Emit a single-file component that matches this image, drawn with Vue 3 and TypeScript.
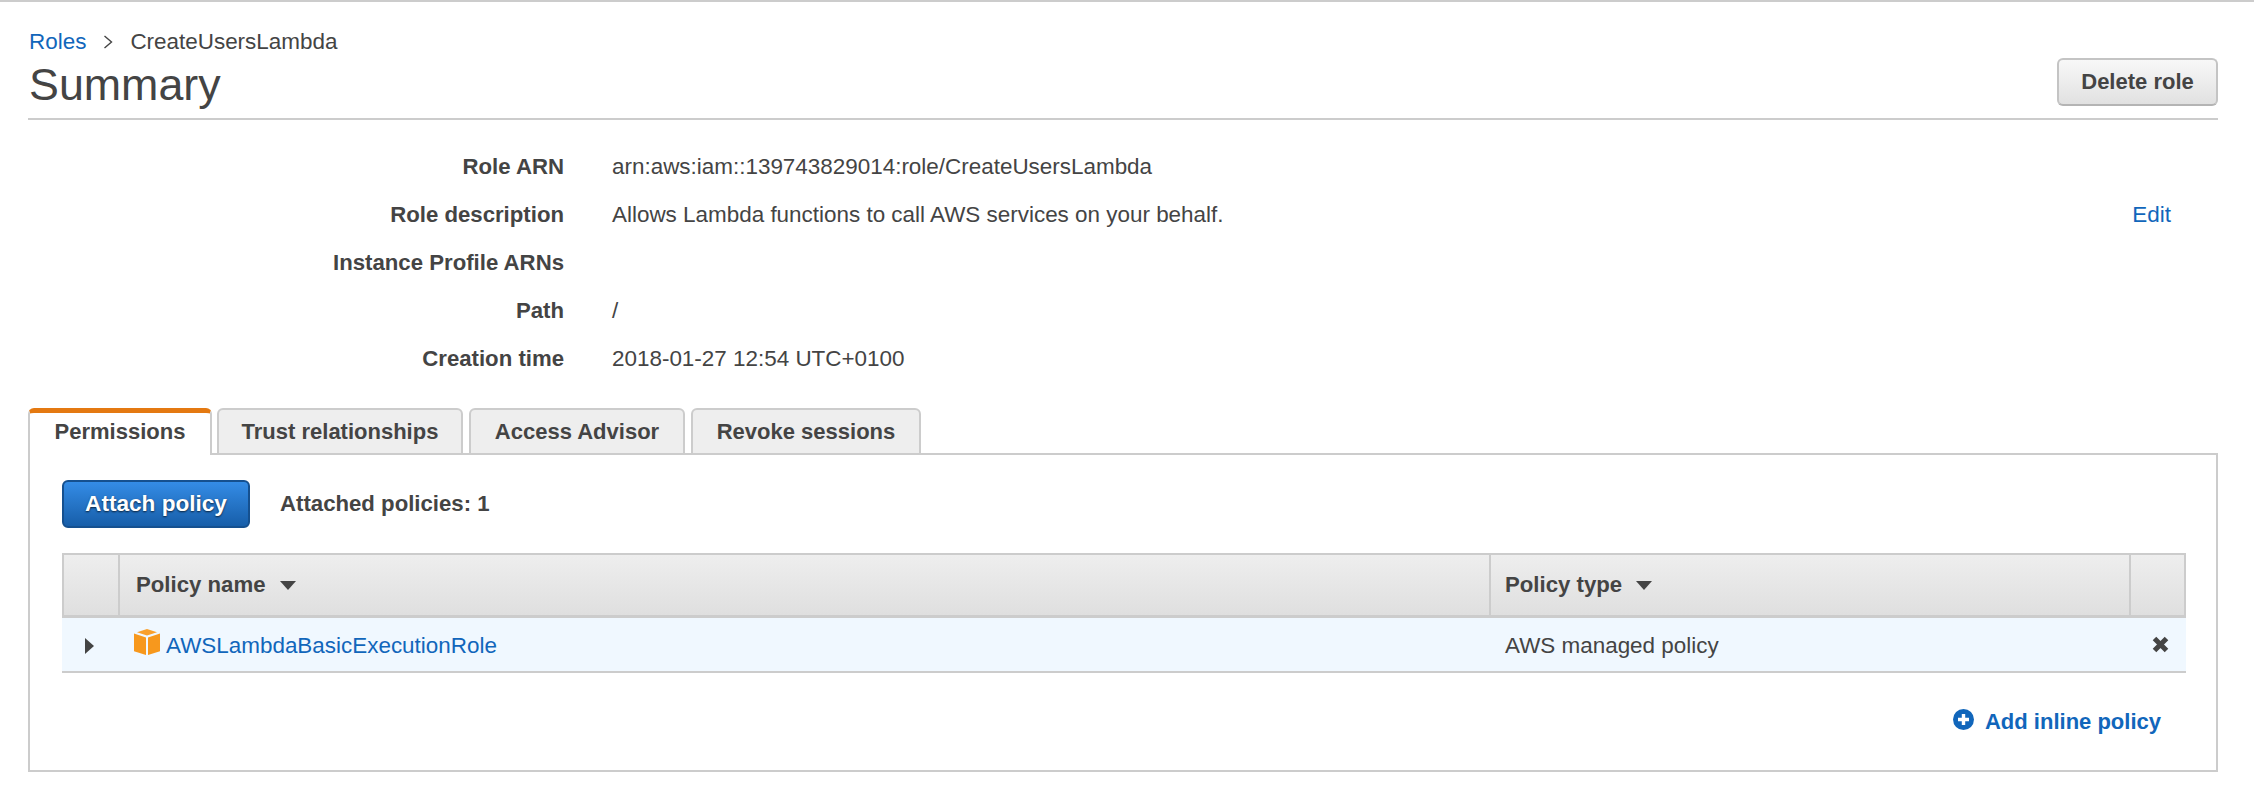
<template>
  <div class="pagina">
    <header class="cabecera">
      <div>
        <nav class="migas">
          <a class="enlace">Roles</a>
          <svg class="sep" width="10" height="14" viewBox="0 0 10 14"><path d="M1.5 1 L8.5 7 L1.5 13" fill="none" stroke="#444" stroke-width="1.4" /></svg>
          <span>CreateUsersLambda</span>
        </nav>
        <h1 class="titulo">Summary</h1>
      </div>
      <button class="btn borrar">Delete role</button>
    </header>

    <section class="detalles">
      <div class="fila" v-for="fila in filas" :key="fila.etiqueta">
        <span class="etiqueta">{{ fila.etiqueta }}</span>
        <span class="valor">{{ fila.valor }}</span>
        <a v-if="fila.editable" class="enlace editar">Edit</a>
      </div>
    </section>

    <div class="pestanas">
      <div
        v-for="p in pestanas"
        :key="p.nombre"
        :class="['pestana', { activa: p.nombre === activa }]"
        :style="{ width: p.ancho + 'px' }"
      >
        {{ p.nombre }}
      </div>
    </div>

    <section class="panel">
      <div class="acciones">
        <button class="btn btn-azul">Attach policy</button>
        <span class="adjuntas">Attached policies: 1</span>
      </div>

      <div class="tabla">
        <div class="celda cab"></div>
        <div class="celda cab texto">Policy name <span class="caret"></span></div>
        <div class="celda cab texto tipo-cab">Policy type <span class="caret"></span></div>
        <div class="celda cab ultima"></div>

        <div class="celda dato flecha-celda"><span class="flecha"></span></div>
        <div class="celda dato nombre">
          <svg class="cubo" width="26" height="26" viewBox="0 0 26 26">
            <path d="M13 0 L23 3.2 L13 6.6 L3 3.2 Z" fill="#f9a02c" />
            <path d="M0 4.6 L12 8.6 V26 L0 22.2 Z" fill="#f7981d" />
            <path d="M26 4.6 L14 8.6 V26 L26 22.2 Z" fill="#f7981d" />
          </svg>
          <a class="enlace">AWSLambdaBasicExecutionRole</a>
        </div>
        <div class="celda dato tipo">AWS managed policy</div>
        <div class="celda dato cerrar">
          <svg width="17" height="17" viewBox="0 0 17 17"><path d="M2.5 2.5 L14.5 14.5 M14.5 2.5 L2.5 14.5" stroke="#444" stroke-width="5" fill="none" /></svg>
        </div>
      </div>

      <div class="pie">
        <a class="enlace agregar">
          <svg class="mas" width="21" height="21" viewBox="0 0 21 21">
            <circle cx="10.5" cy="10.5" r="10.5" fill="#1166bb" />
            <path d="M10.5 5 V16 M5 10.5 H16" stroke="#fff" stroke-width="3.4" />
          </svg>
          Add inline policy
        </a>
      </div>
    </section>
  </div>
</template>

<script setup lang="ts">
interface Fila {
  etiqueta: string;
  valor: string;
  editable?: boolean;
}

const filas: Fila[] = [
  { etiqueta: 'Role ARN', valor: 'arn:aws:iam::139743829014:role/CreateUsersLambda' },
  { etiqueta: 'Role description', valor: 'Allows Lambda functions to call AWS services on your behalf.', editable: true },
  { etiqueta: 'Instance Profile ARNs', valor: '' },
  { etiqueta: 'Path', valor: '/' },
  { etiqueta: 'Creation time', valor: '2018-01-27 12:54 UTC+0100' },
];

const activa = 'Permissions';

const pestanas = [
  { nombre: 'Permissions', ancho: 184 },
  { nombre: 'Trust relationships', ancho: 246 },
  { nombre: 'Access Advisor', ancho: 216 },
  { nombre: 'Revoke sessions', ancho: 230 },
];
</script>

<style>
html,
body {
  background: #fff;
}
</style>

<style scoped>
.pagina {
  box-sizing: border-box;
  height: 804px;
  padding: 0 36px 0 28px;
  border-top: 2px solid #ccc;
  font-family: 'Liberation Sans', Arial, sans-serif;
  font-size: 22.45px;
  color: #444;
  overflow: hidden;
}

.enlace {
  color: #1166bb;
}

.cabecera {
  display: flex;
  justify-content: space-between;
  align-items: flex-end;
  padding: 28px 0 9px;
  border-bottom: 2px solid #ccc;
}

.migas {
  display: flex;
  align-items: center;
  gap: 17px;
  height: 24px;
  margin-left: 1px;
}

.titulo {
  margin: 5px 0 0 1px;
  font-size: 44.8px;
  font-weight: 400;
  line-height: 50px;
}

.btn {
  box-sizing: border-box;
  width: 161px;
  height: 48px;
  border: 2px solid #c4c4c4;
  border-bottom-color: #b4b4b4;
  border-radius: 6px;
  background: linear-gradient(#f8f8f8, #e1e1e1);
  color: #444;
  font-family: inherit;
  font-size: 22px;
  font-weight: 700;
}

.borrar {
  margin-bottom: 3px;
}

.detalles {
  margin-top: 23px;
}

.fila {
  display: flex;
  align-items: center;
  height: 48px;
}

.etiqueta {
  width: 536px;
  font-size: 22.2px;
  font-weight: 700;
  text-align: right;
}

.valor {
  margin-left: 48px;
  flex: 1;
}

.editar {
  margin-right: 47px;
}

.pestanas {
  display: flex;
  margin: 25px 0 -2px;
  gap: 6px;
  position: relative;
}

.pestana {
  box-sizing: border-box;
  height: 47px;
  border: 2px solid #ccc;
  border-radius: 6px 6px 0 0;
  background: #eee;
  font-size: 22px;
  font-weight: 700;
  line-height: 44px;
  text-align: center;
}

.pestana.activa {
  margin-right: -1px;
  border-top: 5px solid #e47911;
  border-bottom: none;
  background: #fff;
  line-height: 38px;
  position: relative;
  z-index: 1;
}

.panel {
  box-sizing: border-box;
  height: 319px;
  padding: 25px 30px 0 32px;
  border: 2px solid #ccc;
}

.acciones {
  display: flex;
  align-items: center;
  gap: 30px;
}

.btn-azul {
  width: 188px;
  border: 2px solid #15508f;
  border-radius: 6px;
  background: linear-gradient(#348ce6, #175ea9);
  color: #fff;
  font-size: 22.6px;
  text-shadow: 0 1px 2px rgba(0, 0, 0, 0.7);
}

.adjuntas {
  font-size: 22.2px;
  font-weight: 700;
}

.tabla {
  display: grid;
  grid-template-columns: 56px 1371px 640px 57px;
  grid-template-rows: 65px 55px;
  margin-top: 25px;
}

.celda {
  box-sizing: border-box;
  display: flex;
  align-items: center;
}

.cab {
  border-top: 2px solid #ccc;
  border-bottom: 3px solid #ccc;
  border-left: 2px solid #ccc;
  background: linear-gradient(#eee, #dfdfdf);
}

.cab.ultima {
  border-right: 2px solid #ccc;
}

.texto {
  padding-left: 16px;
  font-size: 22.2px;
  font-weight: 700;
  white-space: pre;
}

.tipo-cab {
  padding-left: 14px;
}

.caret {
  display: inline-block;
  margin-left: 8px;
  border-left: 8px solid transparent;
  border-right: 8px solid transparent;
  border-top: 9px solid #444;
}

.dato {
  padding-top: 2px;
  background: #f0f8ff;
  border-bottom: 2px solid #ccc;
}

.flecha-celda {
  justify-content: center;
}

.flecha {
  margin-left: -2px;
  border-top: 8px solid transparent;
  border-bottom: 8px solid transparent;
  border-left: 9px solid #444;
}

.nombre {
  padding-left: 16px;
  gap: 6px;
}

.cubo {
  margin-top: -8px;
}

.tipo {
  padding-left: 16px;
}

.cerrar {
  justify-content: center;
}

.cerrar svg {
  margin: -2px 0 0 5px;
}

.pie {
  display: flex;
  justify-content: flex-end;
  margin-top: 36px;
  padding-right: 25px;
}

.agregar {
  display: flex;
  align-items: center;
  gap: 11px;
  font-size: 22px;
  font-weight: 700;
}

.mas {
  margin-top: -6px;
}
</style>
